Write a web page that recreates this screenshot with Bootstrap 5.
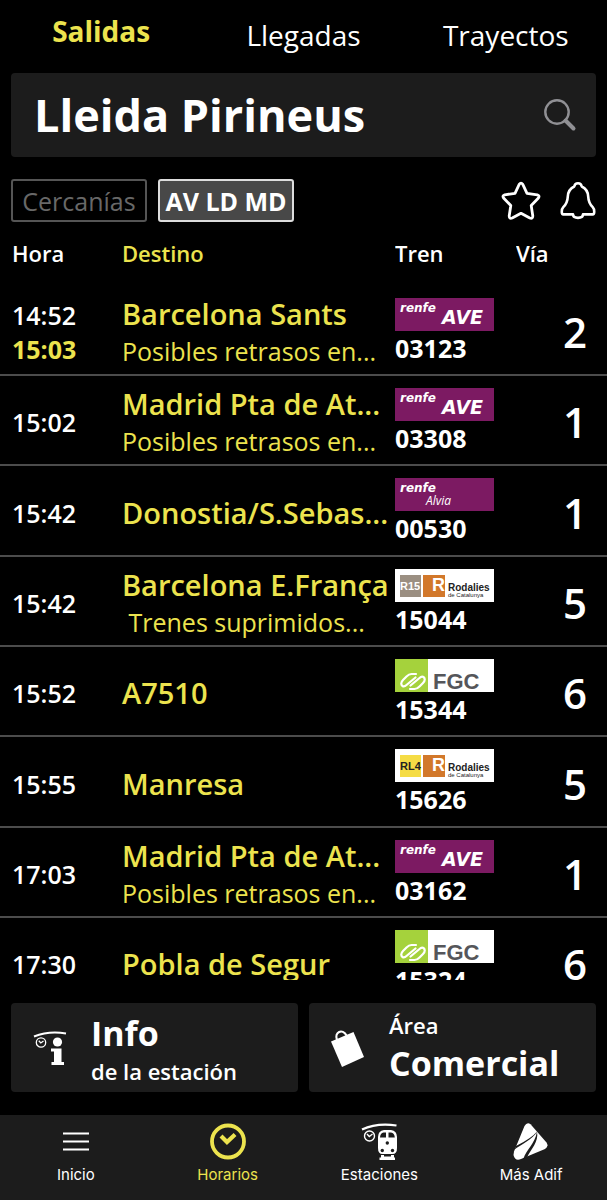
<!DOCTYPE html>
<html lang="es">
<head>
<meta charset="utf-8">
<meta name="viewport" content="width=device-width, initial-scale=1">
<title>Salidas - Lleida Pirineus</title>
<link href="https://cdn.jsdelivr.net/npm/bootstrap@5.3.0/dist/css/bootstrap.min.css" rel="stylesheet">
<style>
  :root { --sun: #ece34e; --panel: #1c1c1c; --rule: #4c4c4c; }
  body { font-family: "Open Sans", sans-serif; background: #000; color: #fff; }
  button { color: inherit; }
  .tabs-top { height: 73px; padding-top: 11px; }
  .tabs-top a { color: #fff; font-size: 28px; line-height: 48px; text-decoration: none; flex: 1 1 0; text-align: center; }
  .tabs-top a.active { color: var(--sun); font-weight: 700; line-height: 40px; }
  .finder { background: var(--panel); border-radius: 4px; height: 84px; margin: 0 11px; padding: 0 19px 0 23px; }
  .finder input { background: none; border: 0; outline: 0; color: #fff; font-weight: 700; font-size: 45px; min-width: 0; padding: 0; }
  .filters { padding: 22px 11px 0; gap: 11px; }
  .filters .filter { width: 136px; height: 43px; border: 2px solid #555; border-radius: 3px; padding: 0; font-size: 25px; line-height: 36px; background: none; color: #686868; }
  .filters .filter.on { background: #484848; border-color: #ddd; color: #fff; font-weight: 700; }
  .plain { background: none; border: 0; padding: 0; line-height: 0; }
  .board { flex: 1 1 0; min-height: 0; overflow-y: auto; scrollbar-width: none; }
  .board::-webkit-scrollbar { display: none; }
  .board table { width: 100%; table-layout: fixed; border-collapse: separate; border-spacing: 0; }
  .board th { position: sticky; top: 0; background: #000; z-index: 1; height: 64px; padding: 15px 0 0; vertical-align: top; font-size: 22px; line-height: 32px; font-weight: 600; }
  .board td { height: 90px; padding: 0; vertical-align: middle; border-bottom: 2px solid var(--rule); white-space: nowrap; }
  .board tr:nth-child(3n) td { height: 91px; }
  .board .c-hora { width: 122px; padding-left: 12px; }
  .board .c-tren { width: 121px; }
  .board .c-via { width: 91px; }
  .board .hora, .board .c-dest { padding-top: 4px; }
  .board .hora { font-size: 25px; font-weight: 600; line-height: 34px; }
  .dest { font-size: 29px; font-weight: 600; line-height: 38px; color: var(--sun); }
  .aviso { font-size: 25px; line-height: 36px; color: var(--sun); }
  .sun { color: var(--sun); }
  .num { font-size: 25px; font-weight: 700; line-height: 34px; }
  .board td.via { font-size: 42px; font-weight: 600; line-height: 60px; text-align: right; padding: 4px 20px 0 0; }
  .logo { display: block; overflow: visible; margin-top: 2px; }
  .t-renfe { font: italic bold 12px "DejaVu Sans", sans-serif; fill: #fff; }
  .t-ave { font: italic bold 19px "DejaVu Sans", sans-serif; fill: #fff; }
  .t-alvia { font: italic 12px "Open Sans", sans-serif; fill: #fff; }
  .t-line { font: bold 11px "Liberation Sans", sans-serif; }
  .t-r { font: bold 18px "Liberation Sans", sans-serif; fill: #fff; }
  .t-rod { font: bold 10px "Liberation Sans", sans-serif; fill: #222; }
  .t-cat { font: 6px "Liberation Sans", sans-serif; fill: #222; }
  .t-fgc { font: bold 22px "Liberation Sans", sans-serif; fill: #55565a; }
  .tiles { padding: 23px 11px; gap: 11px; }
  .tile { flex: 1 1 0; height: 89px; background: var(--panel); border: 0; border-radius: 4px; padding: 0; text-align: left; }
  .tile .ico { width: 80px; padding-left: 20px; flex: none; }
  .tile .big { font-size: 34px; font-weight: 700; line-height: 42px; }
  .tile .sub { font-size: 22px; font-weight: 600; line-height: 34px; }
  .menu { background: var(--panel); height: 85px; padding-top: 6px; }
  .menu a { flex: 1 1 0; text-align: center; color: #fff; text-decoration: none; font: 400 15px/20px Inter, sans-serif; }
  .menu a.active { color: var(--sun); }
  .menu svg { display: block; margin: 0 auto 4px; }
</style>
</head>
<body>
<div class="d-flex flex-column vh-100 overflow-hidden">
  <nav class="tabs-top d-flex" aria-label="Horarios">
    <a href="#salidas" class="active">Salidas</a>
    <a href="#llegadas">Llegadas</a>
    <a href="#trayectos">Trayectos</a>
  </nav>

  <div class="finder d-flex align-items-center">
    <input type="text" class="flex-grow-1" value="Lleida Pirineus" aria-label="Estación">
    <button class="plain" type="button" aria-label="Buscar">
      <svg width="34" height="34" viewBox="0 0 34 34" fill="none" stroke="#909094" stroke-linecap="round"><circle cx="14" cy="14" r="11.7" stroke-width="2.4"/><path d="M22.5 22.5 30.5 30.5" stroke-width="4"/></svg>
    </button>
  </div>

  <div class="filters d-flex align-items-center">
    <button type="button" class="filter">Cercanías</button>
    <button type="button" class="filter on">AV LD MD</button>
    <button class="plain ms-auto" type="button" aria-label="Favorito">
      <svg width="40" height="40" viewBox="0 0 40 40" fill="none" stroke="#fff" stroke-width="2.8" stroke-linejoin="round"><path d="M18.2 3.3Q20 .8 21.8 3.3L26 12.3 36.3 13.8Q39.2 14.8 37.2 17.3L30.2 24.5 31.8 35Q31.7 38.2 28.8 37L20 32.3 11.2 37Q8.3 38.2 8.2 35L9.8 24.5 2.8 17.3Q.8 14.8 3.7 13.8L14 12.3Z"/></svg>
    </button>
    <button class="plain ms-2" type="button" aria-label="Avisos">
      <svg width="36" height="40" viewBox="0 0 36 40" fill="none" stroke="#fff" stroke-width="2.6" stroke-linejoin="round"><path d="M18 2.2C15.8 2.2 14.6 3.6 14.2 5.5C10 7.6 8 11 7.8 15.5C7.6 20.5 6.5 23 3.3 26.2C1.2 28.5 1.3 33.4 3.3 33.4H13C13.3 38 22.7 38 23 33.4H32.7C34.7 33.4 34.8 28.5 32.7 26.2C29.5 23 28.4 20.5 28.2 15.5C28 11 26 7.6 21.8 5.5C21.4 3.6 20.2 2.2 18 2.2Z"/></svg>
    </button>
  </div>

  <main class="board">
    <table>
      <thead>
        <tr><th class="c-hora" scope="col">Hora</th><th class="sun" scope="col">Destino</th><th class="c-tren" scope="col">Tren</th><th class="c-via" scope="col">Vía</th></tr>
      </thead>
      <tbody>
        <tr>
          <td class="c-hora hora"><div>14:52</div><div class="sun fw-bold">15:03</div></td>
          <td class="c-dest"><div class="dest">Barcelona Sants</div><div class="aviso">Posibles retrasos en...</div></td>
          <td><svg class="logo" width="99" height="33"><rect width="99" height="33" fill="#7c1a62"/><text class="t-renfe" x="5" y="14">renfe</text><text class="t-ave" x="47" y="26">AVE</text></svg><div class="num">03123</div></td>
          <td class="via">2</td>
        </tr>
        <tr>
          <td class="c-hora hora">15:02</td>
          <td class="c-dest"><div class="dest">Madrid Pta de At...</div><div class="aviso">Posibles retrasos en...</div></td>
          <td><svg class="logo" width="99" height="33"><rect width="99" height="33" fill="#7c1a62"/><text class="t-renfe" x="5" y="14">renfe</text><text class="t-ave" x="47" y="26">AVE</text></svg><div class="num">03308</div></td>
          <td class="via">1</td>
        </tr>
        <tr>
          <td class="c-hora hora">15:42</td>
          <td class="c-dest"><div class="dest">Donostia/S.Sebas...</div></td>
          <td><svg class="logo" width="99" height="33"><rect width="99" height="33" fill="#7c1a62"/><text class="t-renfe" x="5" y="14">renfe</text><text class="t-alvia" x="31" y="27">Alvia</text></svg><div class="num">00530</div></td>
          <td class="via">1</td>
        </tr>
        <tr>
          <td class="c-hora hora">15:42</td>
          <td class="c-dest"><div class="dest">Barcelona E.França</div><div class="aviso">&nbsp;Trenes suprimidos...</div></td>
          <td><svg class="logo" width="99" height="33"><rect width="99" height="33" fill="#fff"/><rect x="5" y="6" width="21" height="22" fill="#9b8f82"/><text class="t-line" x="5" y="21" fill="#fff">R15</text><rect x="28" y="6" width="22" height="22" fill="#d2782b"/><text class="t-r" x="37" y="22">R</text><text class="t-rod" x="53" y="22">Rodalies</text><text class="t-cat" x="53" y="28">de Catalunya</text></svg><div class="num">15044</div></td>
          <td class="via">5</td>
        </tr>
        <tr>
          <td class="c-hora hora">15:52</td>
          <td class="c-dest"><div class="dest">A7510</div></td>
          <td><svg class="logo" width="99" height="33"><rect width="99" height="33" fill="#fff"/><rect width="33" height="33" fill="#a5d23c"/><g fill="none" stroke="#fff" stroke-width="2.2" stroke-linecap="round"><path d="M21 15H16.5C14.5 15 13 16 11.5 17.5L8 21C5.5 23.5 6 26 7.5 27C9 28 10.5 27 11.5 26L20.5 18.5"/><path d="M15 30H19.5C21.5 30 23 29 24.5 27.5L28 24C30.5 21.5 30 19 28.5 18C27 17 25.5 18 24.5 19L15.5 26.5"/></g><text class="t-fgc" x="38" y="30">FGC</text></svg><div class="num">15344</div></td>
          <td class="via">6</td>
        </tr>
        <tr>
          <td class="c-hora hora">15:55</td>
          <td class="c-dest"><div class="dest">Manresa</div></td>
          <td><svg class="logo" width="99" height="33"><rect width="99" height="33" fill="#fff"/><rect x="5" y="6" width="21" height="22" fill="#f5dc45"/><text class="t-line" x="5" y="21" fill="#222">RL4</text><rect x="28" y="6" width="22" height="22" fill="#d2782b"/><text class="t-r" x="37" y="22">R</text><text class="t-rod" x="53" y="22">Rodalies</text><text class="t-cat" x="53" y="28">de Catalunya</text></svg><div class="num">15626</div></td>
          <td class="via">5</td>
        </tr>
        <tr>
          <td class="c-hora hora">17:03</td>
          <td class="c-dest"><div class="dest">Madrid Pta de At...</div><div class="aviso">Posibles retrasos en...</div></td>
          <td><svg class="logo" width="99" height="33"><rect width="99" height="33" fill="#7c1a62"/><text class="t-renfe" x="5" y="14">renfe</text><text class="t-ave" x="47" y="26">AVE</text></svg><div class="num">03162</div></td>
          <td class="via">1</td>
        </tr>
        <tr>
          <td class="c-hora hora">17:30</td>
          <td class="c-dest"><div class="dest">Pobla de Segur</div></td>
          <td><svg class="logo" width="99" height="33"><rect width="99" height="33" fill="#fff"/><rect width="33" height="33" fill="#a5d23c"/><g fill="none" stroke="#fff" stroke-width="2.2" stroke-linecap="round"><path d="M21 15H16.5C14.5 15 13 16 11.5 17.5L8 21C5.5 23.5 6 26 7.5 27C9 28 10.5 27 11.5 26L20.5 18.5"/><path d="M15 30H19.5C21.5 30 23 29 24.5 27.5L28 24C30.5 21.5 30 19 28.5 18C27 17 25.5 18 24.5 19L15.5 26.5"/></g><text class="t-fgc" x="38" y="30">FGC</text></svg><div class="num">15324</div></td>
          <td class="via">6</td>
        </tr>
      </tbody>
    </table>
  </main>

  <div class="tiles d-flex">
    <button type="button" class="tile d-flex align-items-center">
      <span class="ico"><svg width="38" height="40" viewBox="0 0 38 40" fill="#fff"><path d="M3 8.5Q18 2.5 35 5.5" fill="none" stroke="#fff" stroke-width="2"/><circle cx="10" cy="14.5" r="4.7" fill="none" stroke="#fff" stroke-width="1.3"/><path d="M7.8 12.8 9.8 15 12.5 13" fill="none" stroke="#fff" stroke-width="1.3"/><circle cx="26.5" cy="14" r="4.6"/><path d="M20 20.5H30.5V34H33V37H20.5V34H23V23.5H20Z"/></svg></span>
      <span class="pt-1"><span class="big d-block">Info</span><span class="sub d-block">de la estación</span></span>
    </button>
    <button type="button" class="tile d-flex align-items-center">
      <span class="ico"><svg width="38" height="40" viewBox="0 0 38 40"><path d="M8 12C5 4 13.5 0 17.5 7.5" fill="none" stroke="#fff" stroke-width="2.2"/><path d="M2 13.5 24.5 4 35 29 13 39Z" fill="#fff"/></svg></span>
      <span class="pb-1"><span class="sub d-block">Área</span><span class="big d-block">Comercial</span></span>
    </button>
  </div>

  <nav class="menu d-flex" aria-label="Principal">
    <a href="#inicio"><svg width="40" height="40" viewBox="0 0 40 40" stroke="#fff" stroke-width="2"><path d="M7 12.5H33M7 20.5H33M7 28.5H33"/></svg>Inicio</a>
    <a href="#horarios" class="active"><svg width="40" height="40" viewBox="0 0 40 40" fill="none" stroke="#ece34e"><circle cx="20" cy="20.5" r="16" stroke-width="3.8"/><path d="M14.5 16.5 19 21 25.5 15" stroke-width="4.2" stroke-linecap="square"/></svg>Horarios</a>
    <a href="#estaciones"><svg width="40" height="40" viewBox="0 0 40 40"><path d="M3 8.5Q18 1.5 37.5 4.5" fill="none" stroke="#fff" stroke-width="2.2"/><circle cx="10.5" cy="15" r="5" fill="none" stroke="#fff" stroke-width="1.4"/><path d="M8 13 10.3 15.5 13.5 13" fill="none" stroke="#fff" stroke-width="1.4"/><path d="M25 9H32Q38 10 38 16V27Q38 33 33.5 33H23.5Q19 33 19 27V16Q19 10 25 9Z" fill="#fff"/><path d="M27 11.5V16.5H21Q21.3 12 24.5 11.5ZM29.5 11.5H32Q35.5 12 35.8 16.5H29.5Z" fill="#1c1c1c"/><circle cx="28.3" cy="22" r="1.7" fill="#1c1c1c"/><circle cx="23.3" cy="29.5" r="1.7" fill="#1c1c1c"/><circle cx="33.5" cy="29.5" r="1.7" fill="#1c1c1c"/><path d="M22 34H25V35.5H32V34H35V36.5H36V39H20.5V36.5H22Z" fill="#fff"/></svg>Estaciones</a>
    <a href="#adif"><svg width="40" height="40" viewBox="0 0 40 40"><path d="M13.5 5Q16 .8 19.5 3.2L35.5 21.5Q38 25.5 34 28L10 38Q4 40.5 2.5 34L3 30.5Z" fill="#fff"/><path d="M5 25Q21 17 26 10.5C22 18.5 9 24 3.5 28.5ZM12.5 37.5C15 29 24 23 26 10.5C28 21 20 28 16 36.5Z" fill="#1c1c1c"/></svg>Más Adif</a>
  </nav>
</div>
<script src="https://cdn.jsdelivr.net/npm/bootstrap@5.3.0/dist/js/bootstrap.bundle.min.js"></script>
</body>
</html>
